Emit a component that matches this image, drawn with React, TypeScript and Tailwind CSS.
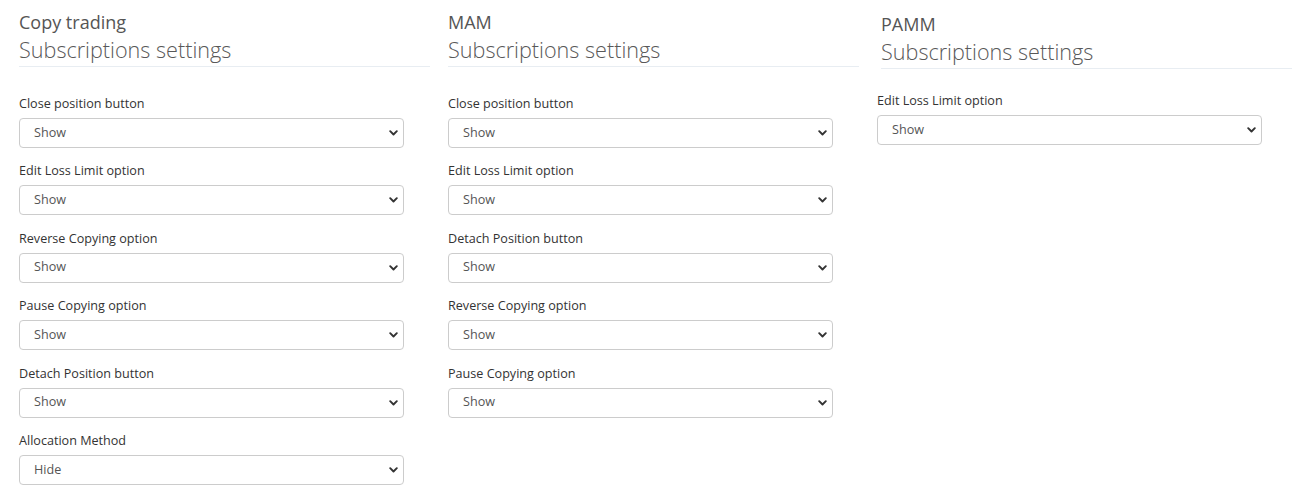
import React from "react";

type Field = { label: string; value: string };

const Chevron = () => (
  <svg
    className="pointer-events-none absolute right-[6px] top-1/2 -translate-y-1/2"
    width="9"
    height="6"
    viewBox="0 0 9 6"
    fill="none"
  >
    <path d="M1.2 1.2 L4.5 4.5 L7.8 1.2" stroke="#333" strokeWidth="1.9" strokeLinecap="round" strokeLinejoin="round" />
  </svg>
);

const SelectField = ({ label, value }: Field) => (
  <div className="flex flex-col">
    <label className="text-[12.6px] leading-[18px] text-[#333] mb-[5px]">{label}</label>
    <div className="relative w-[385px]">
      <select
        defaultValue={value}
        className="h-[30px] w-full appearance-none rounded-[4px] border border-[#ccc] bg-white pl-[14px] text-[12.6px] text-[#555] outline-none"
      >
        <option>Show</option>
        <option>Hide</option>
      </select>
      <Chevron />
    </div>
  </div>
);

const Column = ({
  title,
  fields,
  pamm,
}: {
  title: string;
  fields: Field[];
  pamm?: boolean;
}) => (
  <div className="flex flex-col">
    <div className={pamm ? "pt-[2px] pl-[4px]" : ""}>
      <div className="w-[411px] border-b border-[#e8edf2] pb-[1px]">
        <div className="text-[18px] leading-[26px] text-[#555] pt-[9px]">{title}</div>
        <div className="text-[21.6px] font-light leading-[30px] text-[#585858]">Subscriptions settings</div>
      </div>
    </div>
    <div className={pamm ? "mt-[23px] flex flex-col gap-[14.4px]" : "mt-[28px] flex flex-col gap-[14.4px]"}>
      {fields.map((f) => (
        <SelectField key={f.label} {...f} />
      ))}
    </div>
  </div>
);

export default function App() {
  return (
    <div
      className="flex w-[1314px] h-[501px] bg-white overflow-hidden"
      style={{ fontFamily: '"Open Sans", "Noto Sans", sans-serif' }}
    >
      <div className="ml-[19px]">
        <Column
          title="Copy trading"
          fields={[
            { label: "Close position button", value: "Show" },
            { label: "Edit Loss Limit option", value: "Show" },
            { label: "Reverse Copying option", value: "Show" },
            { label: "Pause Copying option", value: "Show" },
            { label: "Detach Position button", value: "Show" },
            { label: "Allocation Method", value: "Hide" },
          ]}
        />
      </div>
      <div className="ml-[18px]">
        <Column
          title="MAM"
          fields={[
            { label: "Close position button", value: "Show" },
            { label: "Edit Loss Limit option", value: "Show" },
            { label: "Detach Position button", value: "Show" },
            { label: "Reverse Copying option", value: "Show" },
            { label: "Pause Copying option", value: "Show" },
          ]}
        />
      </div>
      <div className="ml-[18px]">
        <Column title="PAMM" pamm fields={[{ label: "Edit Loss Limit option", value: "Show" }]} />
      </div>
    </div>
  );
}
